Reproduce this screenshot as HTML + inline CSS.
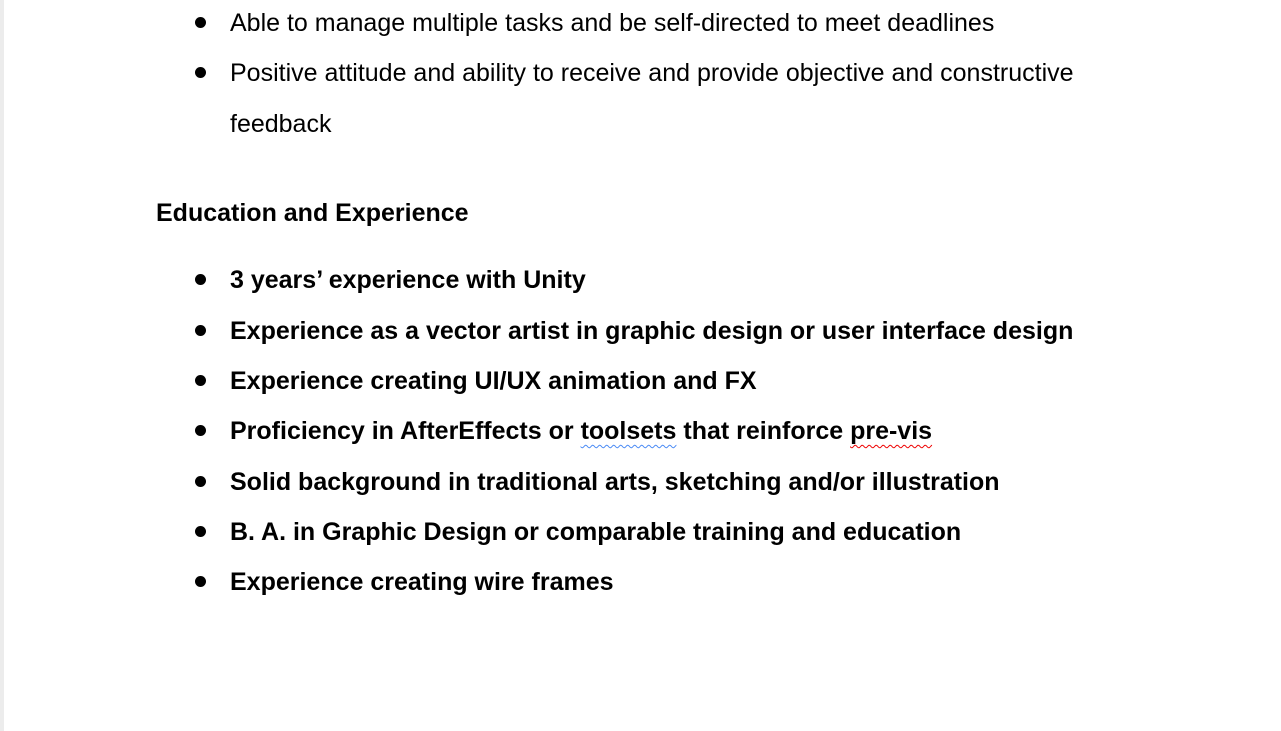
<!DOCTYPE html>
<html><head><style>
body{margin:0;width:1281px;height:731px;background:#fff;position:relative;overflow:hidden;font-family:"Liberation Sans",Arial,sans-serif;color:#000;}
.edge{position:absolute;left:0;top:0;width:4px;height:731px;background:#ececec;}
.l{position:absolute;font-size:25px;line-height:30px;white-space:nowrap;}
.b{font-weight:bold;}
.dot{position:absolute;left:195px;top:0;width:11px;height:11px;border-radius:50%;background:#000;}
.sq{text-decoration:underline wavy;text-underline-offset:5px;text-decoration-thickness:1px;}
</style></head><body>
<div class="edge"></div>
<div class="dot" style="top:17px"></div><div class="l" style="left:230px;top:8px">Able to manage multiple tasks and be self-directed to meet deadlines</div>
<div class="dot" style="top:67px"></div><div class="l" style="left:230px;top:58px">Positive attitude and ability to receive and provide objective and constructive</div>
<div class="l" style="left:230px;top:109px">feedback</div>
<div class="l b" style="left:156px;top:198px">Education and Experience</div>
<div class="dot" style="top:274px"></div><div class="l b" style="left:230px;top:265px">3 years’ experience with Unity</div>
<div class="dot" style="top:325px"></div><div class="l b" style="left:230px;top:316px">Experience as a vector artist in graphic design or user interface design</div>
<div class="dot" style="top:375px"></div><div class="l b" style="left:230px;top:366px">Experience creating UI/UX animation and FX</div>
<div class="dot" style="top:425px"></div><div class="l b" style="left:230px;top:416px">Proficiency in AfterEffects or <span class="sq" style="text-decoration-color:#4a8af4">toolsets</span> that reinforce <span class="sq" style="text-decoration-color:#e00">pre-vis</span></div>
<div class="dot" style="top:476px"></div><div class="l b" style="left:230px;top:467px">Solid background in traditional arts, sketching and/or illustration</div>
<div class="dot" style="top:526px"></div><div class="l b" style="left:230px;top:517px">B. A. in Graphic Design or comparable training and education</div>
<div class="dot" style="top:576px"></div><div class="l b" style="left:230px;top:567px">Experience creating wire frames</div>
</body></html>
